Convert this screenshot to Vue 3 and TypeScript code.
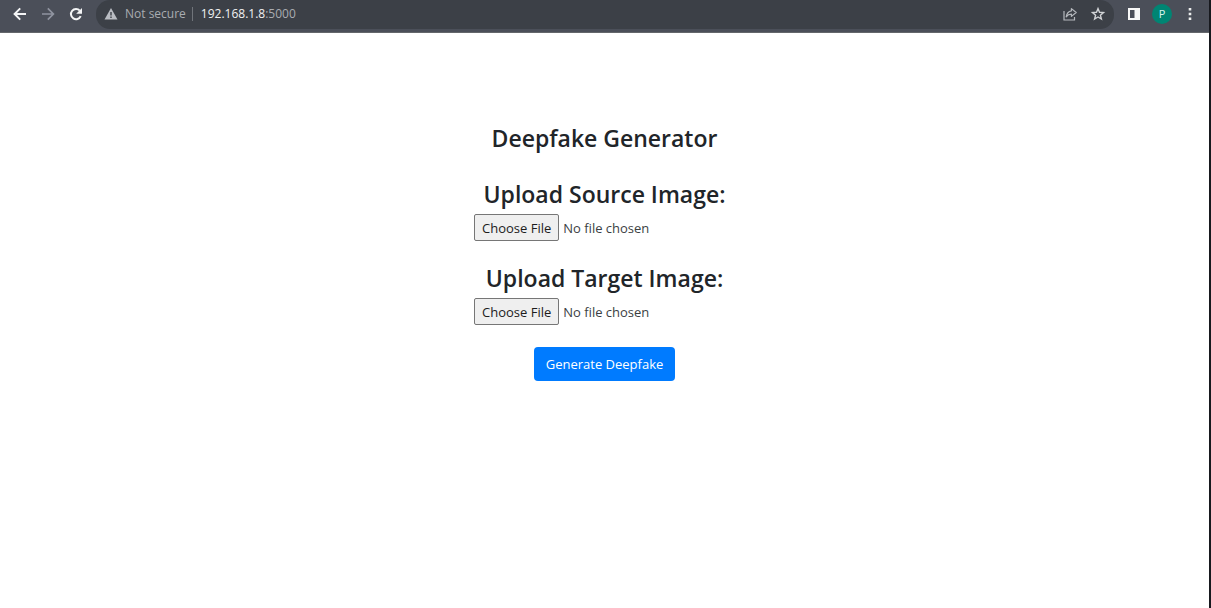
<script setup lang="ts">
import { ref } from 'vue'

interface UploadField {
  id: string
  label: string
}

const address = ref('192.168.1.8')
const port = ref(':5000')
const fields: UploadField[] = [
  { id: 'source', label: 'Upload Source Image:' },
  { id: 'target', label: 'Upload Target Image:' },
]
</script>

<template>
  <div class="window">
    <header class="toolbar">
      <nav class="nav">
        <button type="button" class="icon" aria-label="Back">
          <svg width="16" height="16" viewBox="0 0 16 16" fill="none" stroke="#f4f5f6" stroke-width="2">
            <path d="M14 8H3M8.2 2.4 2.6 8l5.6 5.6" />
          </svg>
        </button>
        <button type="button" class="icon" aria-label="Forward">
          <svg width="16" height="16" viewBox="0 0 16 16" fill="none" stroke="#9094a0" stroke-width="1.7">
            <path d="M2 8h11M7.8 2.4 13.4 8l-5.6 5.6" />
          </svg>
        </button>
        <button type="button" class="icon" aria-label="Reload">
          <svg width="16" height="16" viewBox="0 0 16 16">
            <path d="M12.7 10.2A5.1 5.1 0 1 1 11.8 4.6" fill="none" stroke="#f4f5f6" stroke-width="2" />
            <path d="M14 2v5.8H8.2z" fill="#f4f5f6" />
          </svg>
        </button>
      </nav>
      <div class="omnibox">
        <svg width="14" height="14" viewBox="0 0 14 14" aria-hidden="true">
          <path d="M7 1 13.5 12.6H.5z" fill="#b9bcc2" />
          <path d="M6.3 5h1.4v3.6H6.3zM6.3 9.6h1.4V11H6.3z" fill="#3c4047" />
        </svg>
        <span class="secure">Not secure</span>
        <span class="divider"></span>
        <span class="url"><span class="host">{{ address }}</span>{{ port }}</span>
        <button type="button" class="icon share" aria-label="Share">
          <svg width="16" height="16" viewBox="0 0 16 16" fill="none" stroke="#b5b8bd" stroke-width="1.2">
            <path d="M2 5v9h10.5v-3" />
            <path d="M9.4 2.6 14.2 6.5 9.4 10.4V8.2C7 8.2 5.5 9 4.2 10.8 4.7 7.5 6.5 5.2 9.4 4.8z" stroke-linejoin="round" />
          </svg>
        </button>
        <button type="button" class="icon" aria-label="Bookmark">
          <svg width="16" height="16" viewBox="0 0 16 16" fill="none" stroke="#d0d2d5" stroke-width="1.4">
            <path d="m8 2.6 1.5 3.7 4 .3-3.1 2.6 1 3.9L8 11l-3.400 2.100 1-3.900L2.500 6.600l4-.3z" />
          </svg>
        </button>
      </div>
      <div class="actions">
        <button type="button" class="icon" aria-label="Side panel">
          <svg width="16" height="16" viewBox="0 0 16 16">
            <path d="M2 2h12v12H2zM4 4v8h4.500V4z" fill="#f8f8f8" fill-rule="evenodd" />
          </svg>
        </button>
        <button type="button" class="avatar" aria-label="Profile">P</button>
        <button type="button" class="icon" aria-label="Menu">
          <svg width="16" height="16" viewBox="0 0 16 16" fill="#eceded">
            <path d="M6.700 2h2.600v2.600H6.700zM6.700 6.700h2.600v2.600H6.700zM6.700 11.400h2.600V14H6.700z" />
          </svg>
        </button>
      </div>
    </header>

    <main class="page">
      <h1>Deepfake Generator</h1>
      <form class="form" @submit.prevent>
        <div v-for="field in fields" :key="field.id" class="field">
          <label :for="field.id">{{ field.label }}</label>
          <input :id="field.id" type="file" accept="image/*" />
        </div>
        <button type="submit" class="submit">Generate Deepfake</button>
      </form>
    </main>
  </div>
</template>

<style>
body {
  background: #fff;
}
</style>

<style scoped>
.window {
  box-sizing: border-box;
  min-height: 100vh;
  border-right: 2px solid #17191e;
  font-family: "Open Sans", "Noto Sans", sans-serif;
  color: #212529;
}

.toolbar {
  box-sizing: border-box;
  display: flex;
  align-items: center;
  height: 33px;
  padding: 0 11px 4px 12px;
  background: #4b4f59;
  border-bottom: 1px solid #64676b;
}

.nav {
  display: flex;
  gap: 12px;
  margin-right: 12px;
}

.icon {
  display: flex;
  padding: 0;
  border: 0;
  background: none;
}

.omnibox {
  flex: 1;
  box-sizing: border-box;
  display: flex;
  align-items: center;
  height: 29px;
  padding: 0 8px;
  border-radius: 14px;
  background: #3c4047;
  font-size: 12px;
  line-height: 16px;
  color: #a9acb1;
}

.secure {
  margin-left: 7px;
}

.divider {
  width: 1px;
  height: 14px;
  margin: 0 8px 0 6px;
  background: #70747a;
}

.host {
  color: #f1f2f3;
}

.share {
  margin-left: auto;
  margin-right: 12px;
}

.actions {
  display: flex;
  align-items: center;
  gap: 10px;
  margin-left: 12px;
}

.avatar {
  width: 20px;
  height: 20px;
  padding: 0;
  border: 0;
  border-radius: 50%;
  background: #008573;
  color: #d9f3ee;
  font: 11px/20px "Open Sans", sans-serif;
}

.page {
  display: flex;
  flex-direction: column;
  align-items: center;
  padding-top: 90px;
}

h1,
.field label {
  margin: 0;
  font-size: 23px;
  font-weight: 600;
  line-height: 30px;
}

.form {
  display: flex;
  flex-direction: column;
  align-items: center;
  margin-top: 26px;
}

.field {
  display: flex;
  flex-direction: column;
  align-items: center;
  width: 261px;
  margin-bottom: 22px;
}

.field input {
  width: 100%;
  margin-top: 5px;
  font: 13px/20px "Open Sans", "Noto Sans", sans-serif;
  color: #3b3f43;
}

.field input::file-selector-button {
  height: 27px;
  padding: 0 7px;
  border: 1px solid #767676;
  border-radius: 2px;
  background: #efefef;
  color: #1c1c1c;
  font: inherit;
}

.submit {
  height: 34px;
  padding: 0 12px;
  border: 0;
  border-radius: 4px;
  background: #007bff;
  color: #fff;
  font: 13px/20px "Open Sans", "Noto Sans", sans-serif;
}
</style>
